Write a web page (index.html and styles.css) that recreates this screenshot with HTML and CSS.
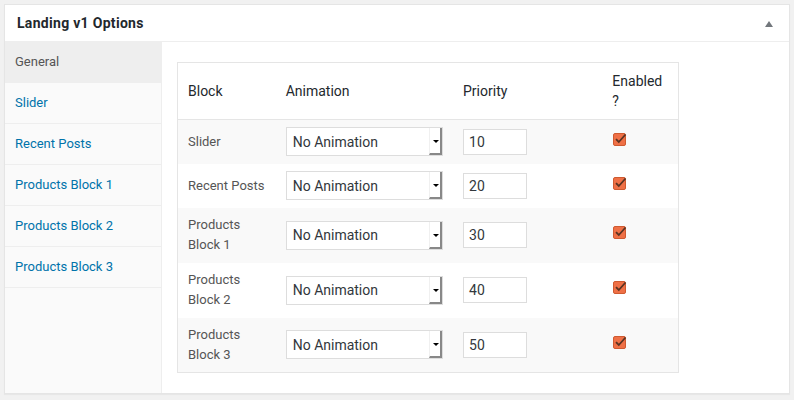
FILE: index.html
```html
<!DOCTYPE html>
<html>
<head>
<meta charset="utf-8">
<link rel="stylesheet" href="styles.css">
</head>
<body>
<div class="panel">
  <div class="panel-header">
    <h2 class="panel-title">Landing v1 Options</h2>
    <span class="toggle"></span>
  </div>
  <div class="panel-body">
    <ul class="tabs">
      <li class="tab active">General</li>
      <li class="tab"><a href="#">Slider</a></li>
      <li class="tab"><a href="#">Recent Posts</a></li>
      <li class="tab"><a href="#">Products Block 1</a></li>
      <li class="tab"><a href="#">Products Block 2</a></li>
      <li class="tab"><a href="#">Products Block 3</a></li>
    </ul>
    <div class="main">
      <table class="blocks">
        <colgroup>
          <col class="c-block"><col class="c-anim"><col class="c-prio"><col class="c-en">
        </colgroup>
        <thead>
          <tr><th>Block</th><th>Animation</th><th>Priority</th><th>Enabled ?</th></tr>
        </thead>
        <tbody>
          <tr class="alt">
            <td>Slider</td>
            <td><div class="select"><span class="sel-text">No Animation</span><span class="sel-arrow"></span></div></td>
            <td><div class="input">10</div></td>
            <td><span class="check"><svg width="15" height="14" viewBox="0 0 15 14"><rect x="0.5" y="1.5" width="12" height="12" rx="1.5" fill="#ef7046" stroke="#cf5a30"/><path d="M3 7.2 L5.8 10 L12.5 2.5" fill="none" stroke="#5a3322" stroke-width="1.8"/></svg></span></td>
          </tr>
          <tr>
            <td>Recent Posts</td>
            <td><div class="select"><span class="sel-text">No Animation</span><span class="sel-arrow"></span></div></td>
            <td><div class="input">20</div></td>
            <td><span class="check"><svg width="15" height="14" viewBox="0 0 15 14"><rect x="0.5" y="1.5" width="12" height="12" rx="1.5" fill="#ef7046" stroke="#cf5a30"/><path d="M3 7.2 L5.8 10 L12.5 2.5" fill="none" stroke="#5a3322" stroke-width="1.8"/></svg></span></td>
          </tr>
          <tr class="alt two">
            <td>Products Block 1</td>
            <td><div class="select"><span class="sel-text">No Animation</span><span class="sel-arrow"></span></div></td>
            <td><div class="input">30</div></td>
            <td><span class="check"><svg width="15" height="14" viewBox="0 0 15 14"><rect x="0.5" y="1.5" width="12" height="12" rx="1.5" fill="#ef7046" stroke="#cf5a30"/><path d="M3 7.2 L5.8 10 L12.5 2.5" fill="none" stroke="#5a3322" stroke-width="1.8"/></svg></span></td>
          </tr>
          <tr class="two">
            <td>Products Block 2</td>
            <td><div class="select"><span class="sel-text">No Animation</span><span class="sel-arrow"></span></div></td>
            <td><div class="input">40</div></td>
            <td><span class="check"><svg width="15" height="14" viewBox="0 0 15 14"><rect x="0.5" y="1.5" width="12" height="12" rx="1.5" fill="#ef7046" stroke="#cf5a30"/><path d="M3 7.2 L5.8 10 L12.5 2.5" fill="none" stroke="#5a3322" stroke-width="1.8"/></svg></span></td>
          </tr>
          <tr class="alt two">
            <td>Products Block 3</td>
            <td><div class="select"><span class="sel-text">No Animation</span><span class="sel-arrow"></span></div></td>
            <td><div class="input">50</div></td>
            <td><span class="check"><svg width="15" height="14" viewBox="0 0 15 14"><rect x="0.5" y="1.5" width="12" height="12" rx="1.5" fill="#ef7046" stroke="#cf5a30"/><path d="M3 7.2 L5.8 10 L12.5 2.5" fill="none" stroke="#5a3322" stroke-width="1.8"/></svg></span></td>
          </tr>
        </tbody>
      </table>
    </div>
  </div>
</div>
</body>
</html>
```

FILE: styles.css
```css
* { box-sizing: border-box; }
html, body { margin: 0; }
body {
  background: #f1f1f1;
  padding: 4px;
  font-family: Roboto, "Liberation Sans", Arial, sans-serif;
  color: #23282d;
}
.panel {
  width: 786px;
  height: 390px;
  background: #fff;
  border: 1px solid #e5e5e5;
  box-shadow: 0 1px 1px rgba(0,0,0,.04);
  display: flex;
  flex-direction: column;
}
.panel-header {
  flex: 0 0 37px;
  height: 37px;
  border-bottom: 1px solid #eee;
  display: flex;
  align-items: center;
  justify-content: space-between;
  padding: 0 16px 0 12px;
}
.panel-title {
  margin: 0;
  font-size: 14px;
  font-weight: 700;
  letter-spacing: 0.3px;
  color: #23282d;
}
.toggle {
  width: 0; height: 0;
  border-left: 4px solid transparent;
  border-right: 4px solid transparent;
  border-bottom: 6px solid #72777c;
  margin-top: 1px;
}
.panel-body {
  flex: 1 1 auto;
  min-height: 0;
  display: flex;
}
.tabs {
  list-style: none;
  margin: 0;
  padding: 0;
  width: 157px;
  background: #fafafa;
  border-right: 1px solid #eee;
}
.tab {
  height: 41px;
  border-bottom: 1px solid #eee;
  padding: 0 10px 2px;
  display: flex;
  align-items: center;
  font-size: 13px;
}
.tab a { color: #0073aa; text-decoration: none; }
.tab.active { background: #eee; color: #555; }
.main {
  flex: 1;
  padding: 20px 15px;
}
.blocks {
  border-collapse: collapse;
  table-layout: fixed;
  width: 502px;
  border: 1px solid #e5e5e5;
}
.c-block { width: 98px; }
.c-anim { width: 177px; }
.c-prio { width: 149px; }
.c-en { width: 76px; }
.blocks th {
  text-align: left;
  font-weight: 400;
  font-size: 14px;
  line-height: 20px;
  padding: 8px 10px;
  color: #23282d;
  border-bottom: 1px solid #e5e5e5;
  height: 56px;
}
.blocks td {
  font-size: 13px;
  line-height: 20px;
  color: #555;
  padding: 7px 10px;
  vertical-align: middle;
}
.blocks tr.alt td { background: #f9f9f9; }
.blocks tbody tr { height: 44px; }
.blocks tbody tr.two { height: 55px; }
.select {
  width: 157px;
  height: 29px;
  border: 1px solid #ddd;
  background: #fff;
  display: flex;
  align-items: stretch;
}
.sel-text {
  flex: 1;
  font-size: 14px;
  color: #32373c;
  padding-left: 6px;
  display: flex;
  align-items: center;
}
.sel-arrow {
  width: 13px;
  position: relative;
  border-left: 1px solid #f0f0f0;
  border-right: 2px solid #888;
  border-bottom: 2px solid #888;
  background: #fff;
}
.sel-arrow::after {
  content: "";
  position: absolute;
  left: 3px;
  top: 12px;
  border-left: 3px solid transparent;
  border-right: 3px solid transparent;
  border-top: 3px solid #000;
}
.input {
  width: 64px;
  height: 26px;
  border: 1px solid #ddd;
  background: #fff;
  font-size: 14px;
  color: #32373c;
  padding: 0 5px;
  display: flex;
  align-items: center;
}
.check {
  display: inline-flex;
  margin-left: 1px;
}
```
